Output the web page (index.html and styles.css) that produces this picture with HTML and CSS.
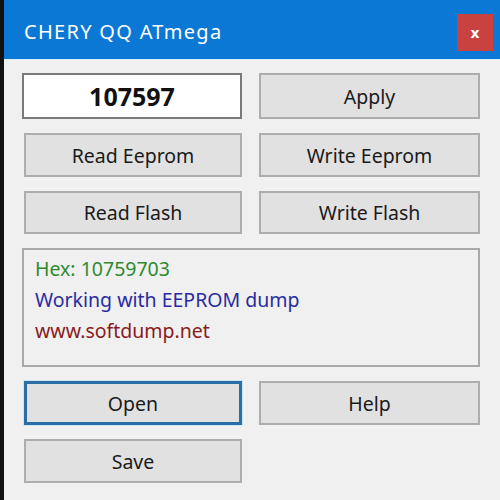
FILE: index.html
```html
<!DOCTYPE html>
<html lang="en">
<head>
  <meta charset="UTF-8" />
  <title>CHERY QQ ATmega</title>
  <link rel="stylesheet" href="styles.css">
</head>
<body>
  <div class="window">
    <div class="titlebar">
      <span class="title">CHERY QQ ATmega</span>
      <button class="close">x</button>
    </div>
    <div class="client">
      <div class="grid">
        <input class="code" type="text" value="107597">
        <button class="btn">Apply</button>
        <button class="btn">Read Eeprom</button>
        <button class="btn">Write Eeprom</button>
        <button class="btn">Read Flash</button>
        <button class="btn">Write Flash</button>
        <div class="log">
          <div class="hex">Hex: 10759703</div>
          <div class="info">Working with EEPROM dump</div>
          <div class="site">www.softdump.net</div>
        </div>
        <button class="btn focused">Open</button>
        <button class="btn">Help</button>
        <button class="btn">Save</button>
      </div>
    </div>
  </div>
</body>
</html>
```

FILE: styles.css
```css
body {
  margin: 0;
  padding: 0;
  background-color: #f0f0f0;
  font-family: 'Noto Sans', sans-serif;
}

.window {
  height: 500px;
  border-left: 4px solid #111;
  box-sizing: border-box;
  background-color: #f0f0f0;
}

.titlebar {
  height: 60px;
  background-color: #0a78d4;
  display: flex;
  align-items: center;
  justify-content: space-between;
  padding-left: 20px;
  padding-right: 7px;
  border-bottom: 1px solid #d6eef8;
  box-sizing: border-box;
}

.title {
  color: #fff;
  font-size: 20px;
  letter-spacing: 1.3px;
  margin-top: 4px;
}

.close {
  width: 36px;
  height: 37px;
  margin-top: 6px;
  border: none;
  background-color: #c9423f;
  color: #fff;
  font-family: 'DejaVu Sans', sans-serif;
  font-weight: bold;
  font-size: 14px;
  padding: 0;
}

.grid {
  display: grid;
  grid-template-columns: 218px 221px;
  grid-template-rows: 46px 44px 43px 119px 44px 44px;
  column-gap: 17px;
  row-gap: 14px;
  padding: 13px 0 0 20px;
}

.btn {
  background-color: #e1e1e1;
  border: 2px solid #adadad;
  color: #1a1a1a;
  font-family: 'Noto Sans', sans-serif;
  font-size: 19.5px;
  padding: 0;
}

.btn.focused {
  border: 3px solid #2b6ea6;
  box-shadow: 0 0 0 1px #cbe6f7;
}

.code {
  margin-left: -2px;
  width: 220px;
  box-sizing: border-box;
  border: 2px solid #7a7a7a;
  background-color: #fff;
  text-align: center;
  font-family: 'Noto Sans', sans-serif;
  font-weight: bold;
  font-size: 25px;
  color: #111;
  padding: 0;
}

.log {
  grid-column: 1 / 3;
  margin-left: -2px;
  border: 2px solid #a9a9a9;
  background-color: #f0f0f0;
  padding: 3px 0 0 11px;
  font-size: 19.5px;
  line-height: 31px;
}

.hex { color: #2f8a2f; }
.info { color: #2a2ca0; }
.site { color: #8a1c1c; }
```
